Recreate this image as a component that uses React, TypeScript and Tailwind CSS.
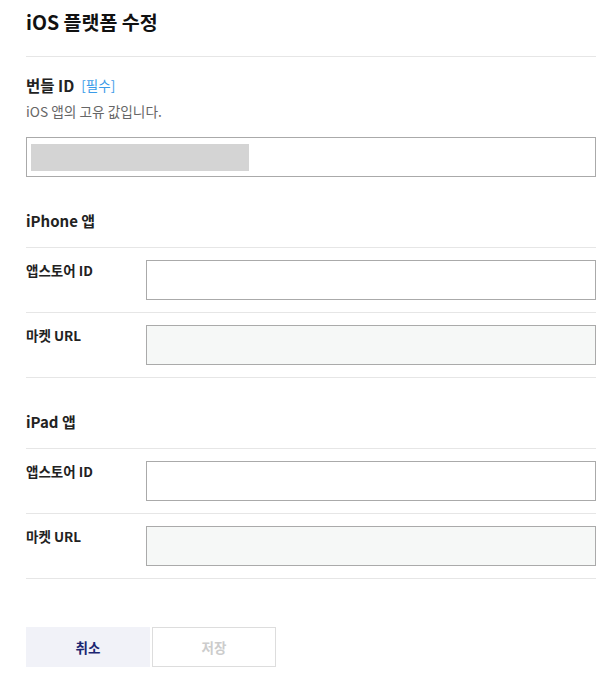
import React from "react";

const font = { fontFamily: '"Noto Sans CJK KR", "Noto Sans", sans-serif' };

function Row({ label, disabled }: { label: string; disabled?: boolean }) {
  return (
    <div className="flex border-b border-[#e6e6e6] py-[12px]">
      <div className="w-[120px] text-[13.5px] font-bold leading-[20px] text-[#222]">{label}</div>
      <div
        className={
          "h-[40px] flex-1 border border-[#aaaaaa] " + (disabled ? "bg-[#f6f8f7]" : "bg-white")
        }
      />
    </div>
  );
}

function Section({ title }: { title: string }) {
  return (
    <div>
      <div className="mt-[33px] border-b border-[#e6e6e6] pb-[15px] text-[15px] font-bold leading-[22px] text-[#222]">
        {title}
      </div>
      <Row label="앱스토어 ID" />
      <Row label="마켓 URL" disabled />
    </div>
  );
}

export default function App() {
  return (
    <div className="min-h-[695px] w-[616px] bg-white pl-[26px] pr-[20px]" style={font}>
      <div className="h-[57px] border-b border-[#e6e6e6] pt-[8px] text-[19.5px] font-bold leading-[28px] text-[#111]">
        iOS 플랫폼 수정
      </div>
      <div className="mt-[17px] flex items-center gap-[7px] text-[15.5px] font-bold leading-[22px] text-[#222]">
        <span>번들 ID</span>
        <span className="text-[13.5px] font-normal text-[#3b9be8]">[필수]</span>
      </div>
      <div className="mt-[5px] text-[13.7px] leading-[20px] text-[#666]">iOS 앱의 고유 값입니다.</div>
      <div className="mt-[16px] flex h-[40px] items-center border border-[#aaaaaa] px-[4px]">
        <div className="h-[27px] w-[218px] bg-[#d4d4d4]" />
      </div>
      <Section title="iPhone 앱" />
      <Section title="iPad 앱" />
      <div className="mt-[48px] flex gap-[2px]">
        <button className="h-[40px] w-[124px] bg-[#f1f2f8] text-[13.5px] font-bold text-[#1c2671]">취소</button>
        <button className="h-[40px] w-[124px] border border-[#dddddd] bg-white text-[13.5px] font-bold text-[#cccccc]">
          저장
        </button>
      </div>
    </div>
  );
}
